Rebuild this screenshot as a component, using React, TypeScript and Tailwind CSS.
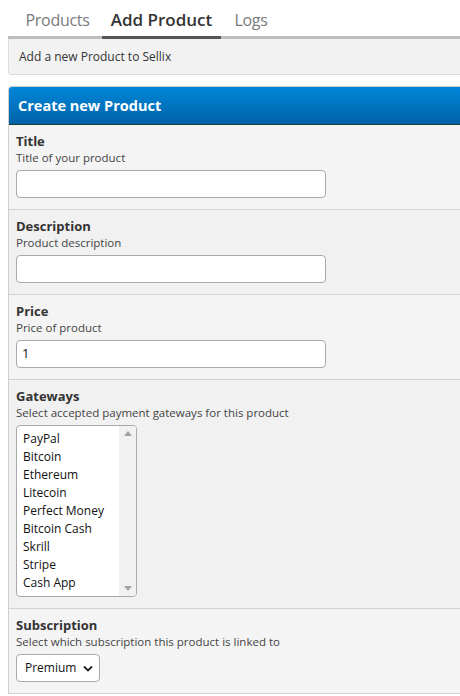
import React from 'react';

const gateways = ['PayPal', 'Bitcoin', 'Ethereum', 'Litecoin', 'Perfect Money', 'Bitcoin Cash', 'Skrill', 'Stripe', 'Cash App'];

const Field: React.FC<{ title: string; hint: string; shade: string; children: React.ReactNode }> = ({ title, hint, shade, children }) => (
  <div className={`${shade} border-b border-[#d2d2d2] pl-[7px] pt-[8px] pb-[11px]`}>
    <div className="text-[13px] font-bold text-[#333] leading-[17px]">{title}</div>
    <div className="text-[11.5px] text-[#444] leading-[15px] mb-[5px]">{hint}</div>
    {children}
  </div>
);

const App: React.FC = () => {
  return (
    <div className="w-[460px] h-[696px] overflow-hidden bg-white" style={{ fontFamily: '"Open Sans", "Noto Sans", sans-serif' }}>
      {/* Tabs */}
      <div className="ml-[8px] w-[470px] flex border-b-[3px] border-[#bdbdbd] pl-[10px] pt-[8px]">
        <div className="w-[79px] text-center pb-[4px] text-[16px] tracking-[-0.3px] leading-[24px] text-[#7a7a7a]">Products</div>
        <div className="ml-[5px] w-[119px] text-center pb-[4px] -mb-[3px] border-b-[3px] border-[#555] text-[17px] leading-[24px] font-semibold text-[#333]">Add Product</div>
        <div className="ml-[5px] w-[50px] text-center pb-[4px] text-[16px] tracking-[-0.3px] leading-[24px] text-[#7a7a7a]">Logs</div>
      </div>

      {/* Info box */}
      <div className="ml-[8px] w-[470px] h-[36px] bg-[#f2f2f2] border border-t-0 border-[#dcdcdc] rounded-bl-[4px] flex items-center pl-[10px]">
        <span className="text-[12px] text-[#333]">Add a new Product to Sellix</span>
      </div>

      {/* Panel */}
      <div className="ml-[8px] mt-[11px] w-[470px] border-l border-t border-[#cfcfcf] rounded-tl-[4px]">
        <div className="h-[38px] bg-gradient-to-b from-[#0086da] to-[#0063a8] border-b border-[#1e3d3a] rounded-tl-[3px] flex items-center pl-[9px]">
          <span className="text-[14.5px] font-bold text-white">Create new Product</span>
        </div>

        <Field title="Title" hint="Title of your product" shade="bg-[#f4f4f4]">
          <div className="w-[310px] h-[28px] bg-white border border-[#a9a9a9] rounded-[4px]" />
        </Field>

        <Field title="Description" hint="Product description" shade="bg-[#f1f1f1]">
          <div className="w-[310px] h-[28px] bg-white border border-[#a9a9a9] rounded-[4px]" />
        </Field>

        <Field title="Price" hint="Price of product" shade="bg-[#f4f4f4]">
          <div className="w-[310px] h-[28px] bg-white border border-[#a9a9a9] rounded-[4px] flex items-center pl-[5px] text-[13px] text-[#111]">1</div>
        </Field>

        <Field title="Gateways" hint="Select accepted payment gateways for this product" shade="bg-[#f1f1f1]">
          <div className="w-[121px] h-[172px] bg-white border border-[#a9a9a9] rounded-[4px] flex overflow-hidden">
            <div className="flex-1 pl-[6px] pt-[4px]">
              {gateways.map(g => (
                <div key={g} className="text-[12px] leading-[18px] text-[#111] whitespace-nowrap">{g}</div>
              ))}
            </div>
            <div className="w-[17px] bg-[#f1f1f1] flex flex-col justify-between items-center py-[5px]">
              <svg width="8" height="5" viewBox="0 0 8 5"><path d="M0 5 L4 0 L8 5 Z" fill="#a3a3a3" /></svg>
              <svg width="8" height="5" viewBox="0 0 8 5"><path d="M0 0 L4 5 L8 0 Z" fill="#a3a3a3" /></svg>
            </div>
          </div>
        </Field>

        <Field title="Subscription" hint="Select which subscription this product is linked to" shade="bg-[#f4f4f4]">
          <div className="w-[84px] h-[28px] bg-white border border-[#a9a9a9] rounded-[4px] flex items-center pl-[8px] pr-[6px] justify-between">
            <span className="text-[12px] text-[#111]">Premium</span>
            <svg width="10" height="7" viewBox="0 0 10 7"><path d="M1 1.5 L5 5.5 L9 1.5" fill="none" stroke="#222" strokeWidth="1.8" /></svg>
          </div>
        </Field>
      </div>
    </div>
  );
};

export default App;
